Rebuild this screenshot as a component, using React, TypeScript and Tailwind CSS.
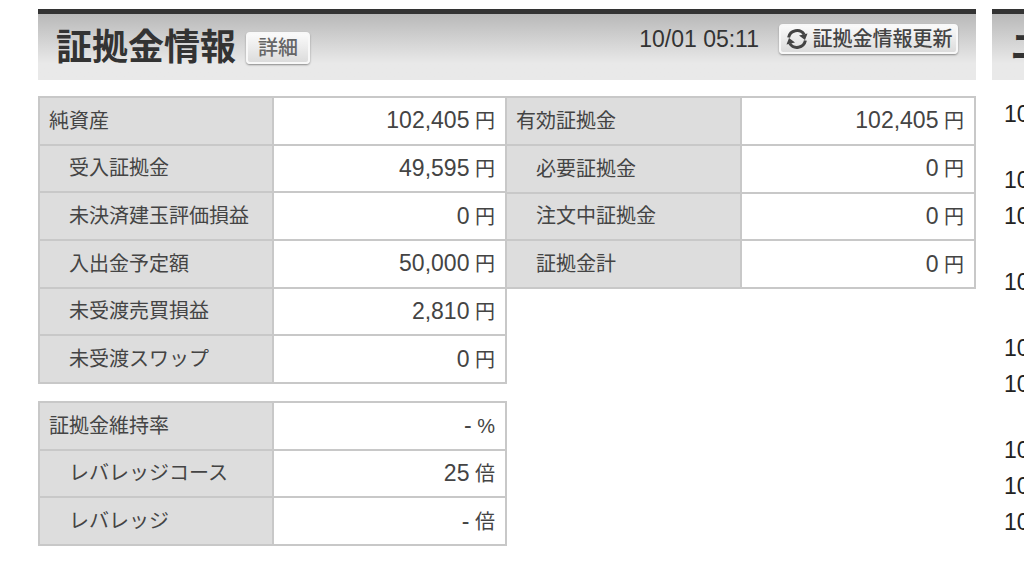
import React from 'react'

interface Row {
  label: string
  value: string
  unit: string
  indent?: boolean
}

const assetRows: Row[] = [
  { label: '純資産', value: '102,405', unit: '円' },
  { label: '受入証拠金', value: '49,595', unit: '円', indent: true },
  { label: '未決済建玉評価損益', value: '0', unit: '円', indent: true },
  { label: '入出金予定額', value: '50,000', unit: '円', indent: true },
  { label: '未受渡売買損益', value: '2,810', unit: '円', indent: true },
  { label: '未受渡スワップ', value: '0', unit: '円', indent: true },
]

const marginRows: Row[] = [
  { label: '有効証拠金', value: '102,405', unit: '円' },
  { label: '必要証拠金', value: '0', unit: '円', indent: true },
  { label: '注文中証拠金', value: '0', unit: '円', indent: true },
  { label: '証拠金計', value: '0', unit: '円', indent: true },
]

const leverageRows: Row[] = [
  { label: '証拠金維持率', value: '-', unit: '%' },
  { label: 'レバレッジコース', value: '25', unit: '倍', indent: true },
  { label: 'レバレッジ', value: '-', unit: '倍', indent: true },
]

// number of text lines each news entry takes
const newsLines = [2, 1, 2, 2, 1, 2, 1, 1, 1]

const headerClass =
  'flex h-[71px] items-start justify-between border-t-[5px] border-[#333] bg-linear-to-b from-[#b9b9b9] to-[#e9e9e9] to-75%'

const buttonClass =
  'flex items-center justify-center rounded-sm border-2 border-[#f8f8f8] bg-linear-to-b from-[#fafafa] to-[#dcdcdc] text-xl leading-none font-medium shadow-[0_1px_2px_#888]'

const RefreshIcon = () => (
  <svg viewBox="0 0 24 24" className="size-6" fill="none" aria-hidden="true">
    <path d="M3.6 10.5a8.6 8.6 0 0 1 15.6-3" stroke="#444" strokeWidth="3" />
    <path d="M20.4 13.5a8.6 8.6 0 0 1-15.6 3" stroke="#444" strokeWidth="3" />
    <path d="M14 8.5L22.5 6.5L20 13z" fill="#444" />
    <path d="M10 15.5L1.5 17.5L4 11z" fill="#444" />
  </svg>
)

const DataTable: React.FC<{ rows: Row[]; className: string }> = ({ rows, className }) => (
  <table className={`w-full table-fixed border-collapse text-xl leading-6 text-[#444] ${className}`}>
    <tbody>
      {rows.map((row) => (
        <tr key={row.label}>
          <th
            scope="row"
            className={`w-1/2 border-2 border-[#c8c8c8] bg-[#ddd] py-0 text-left font-normal whitespace-nowrap ${
              row.indent ? 'pl-[29px]' : 'pl-[9px]'
            }`}
          >
            {row.label}
          </th>
          <td className="border-2 border-[#c8c8c8] bg-white py-0 pr-2.5 text-right whitespace-nowrap">
            <span className="text-[23px]">{row.value}</span> {row.unit}
          </td>
        </tr>
      ))}
    </tbody>
  </table>
)

const App: React.FC = () => {
  return (
    <div className="flex gap-4 overflow-hidden bg-white pt-[9px] pl-[38px] font-['Liberation_Sans','Noto_Sans_CJK_JP',sans-serif]">
      <main className="min-w-0 flex-1">
        <header className={headerClass}>
          <div className="flex items-center pt-3 pl-[18px]">
            <h1 className="text-4xl leading-[44px] font-bold text-[#333]">証拠金情報</h1>
            <button type="button" className={`ml-2.5 h-8 w-16 text-[#666] ${buttonClass}`}>
              詳細
            </button>
          </div>
          <div className="flex items-center gap-5 pt-[9px] pr-[18px]">
            <time className="text-[23px] leading-8 text-[#333]">10/01 05:11</time>
            <button type="button" className={`h-[30px] w-[179px] gap-1 text-[#444] ${buttonClass}`}>
              <RefreshIcon />
              証拠金情報更新
            </button>
          </div>
        </header>

        <div className="mt-4 grid grid-cols-2 items-start gap-y-[17px]">
          <DataTable rows={assetRows} className="h-[288px]" />
          <DataTable rows={marginRows} className="h-[193px] [&_th]:border-l-0" />
          <DataTable rows={leverageRows} className="h-[145px]" />
        </div>
      </main>

      <aside className="w-8 overflow-hidden whitespace-nowrap">
        <header className={headerClass}>
          <h2 className="pt-3 pl-[18px] text-4xl leading-[44px] font-bold text-[#333]">ニュース</h2>
        </header>
        <ul className="mt-[19px] flex flex-col gap-1.5 pl-3 text-[23px] leading-[30px] text-[#222]">
          {newsLines.map((lines, i) => (
            <li key={i} className={lines === 2 ? 'h-[60px]' : 'h-[30px]'}>
              10/01
            </li>
          ))}
        </ul>
      </aside>
    </div>
  )
}

export default App
